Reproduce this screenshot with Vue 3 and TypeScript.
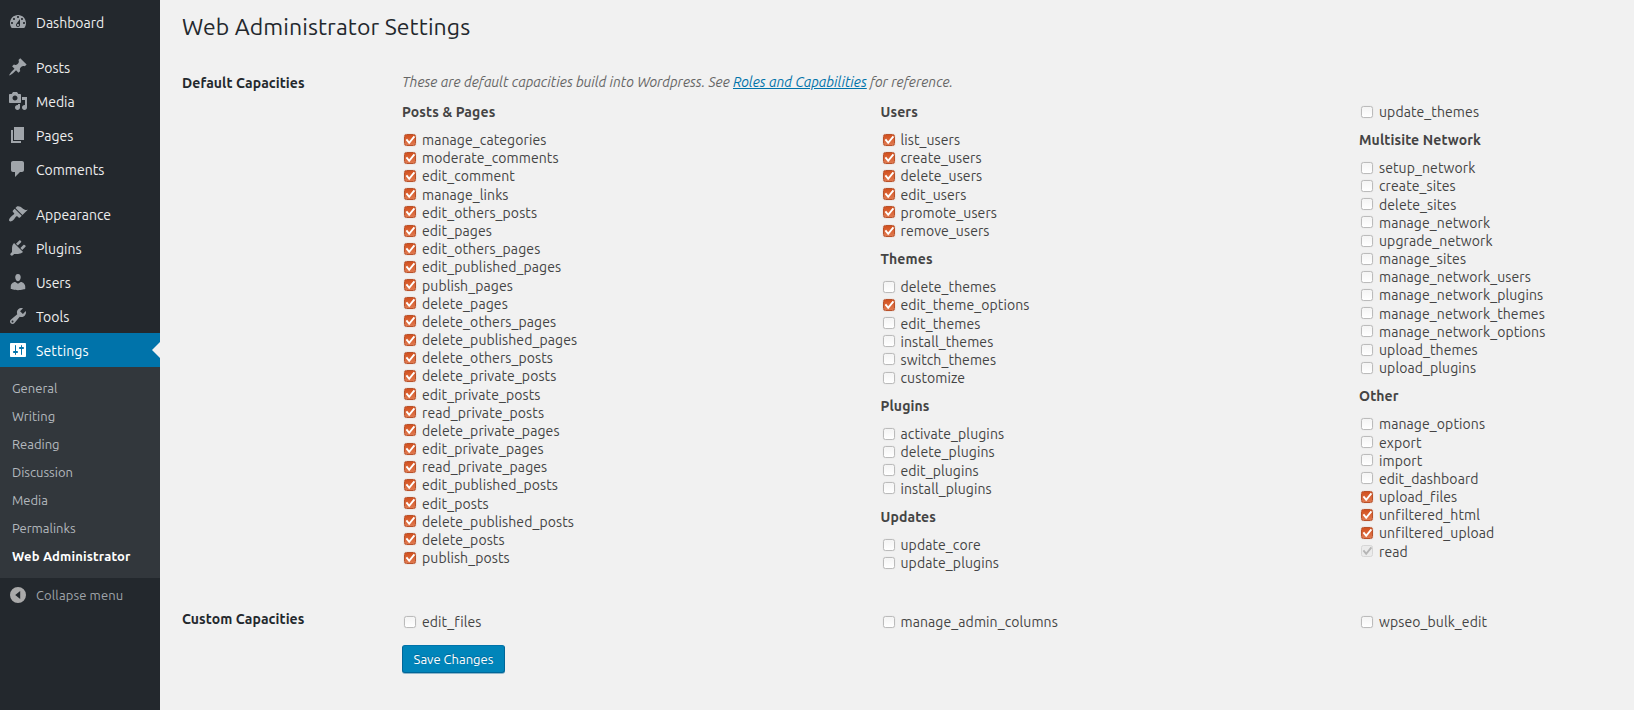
<script setup lang="ts">
interface MenuEntry {
  label: string
  icon: string
  gapBefore?: boolean
  current?: boolean
}

interface Capability {
  name: string
  checked: boolean
  disabled?: boolean
}

interface Group {
  title?: string
  items: Capability[]
}

const menu: MenuEntry[] = [
  { label: 'Dashboard', icon: 'M3.76 16h12.48c1.1-1.37 1.76-3.11 1.76-5 0-4.42-3.58-8-8-8s-8 3.58-8 8c0 1.89.66 3.63 1.76 5zM10 4c.55 0 1 .45 1 1s-.45 1-1 1-1-.45-1-1 .45-1 1-1zM6 6c.55 0 1 .45 1 1s-.45 1-1 1-1-.45-1-1 .45-1 1-1zm8 0c.55 0 1 .45 1 1s-.45 1-1 1-1-.45-1-1 .45-1 1-1zm-5.37 5.55L12 7v6c0 1.1-.9 2-2 2s-2-.9-2-2c0-.57.24-1.08.63-1.45zM4 10c.55 0 1 .45 1 1s-.45 1-1 1-1-.45-1-1 .45-1 1-1zm12 0c.55 0 1 .45 1 1s-.45 1-1 1-1-.45-1-1 .45-1 1-1zm-5 3c0-.55-.45-1-1-1s-1 .45-1 1 .45 1 1 1 1-.45 1-1z' },
  { label: 'Posts', gapBefore: true, icon: 'M10.44 3.02l1.82-1.82 6.36 6.35-1.83 1.82c-1.05-.68-2.48-.57-3.41.36l-.75.75c-.92.93-1.04 2.35-.35 3.41l-1.83 1.82-2.41-2.41-2.8 2.79c-.42.42-3.38 2.71-3.8 2.29s1.86-3.39 2.28-3.81l2.79-2.79L4.1 9.36l1.83-1.82c1.05.69 2.48.57 3.4-.36l.75-.75c.93-.92 1.05-2.35.36-3.41z' },
  { label: 'Media', icon: 'M13 11V4c0-.55-.45-1-1-1h-1.67L9 1H5L3.67 3H2c-.55 0-1 .45-1 1v7c0 .55.45 1 1 1h10c.55 0 1-.45 1-1zM7 4.5c1.38 0 2.5 1.12 2.5 2.5S8.38 9.5 7 9.5 4.5 8.38 4.5 7 5.62 4.5 7 4.5zM14 6h5v10.5c0 1.38-1.12 2.5-2.5 2.5S14 17.88 14 16.5s1.12-2.5 2.5-2.5c.17 0 .34.02.5.05V9h-3V6zm-4 8.05V13h2v3.5c0 1.38-1.12 2.5-2.5 2.5S7 17.88 7 16.5 8.12 14 9.5 14c.17 0 .34.02.5.05z' },
  { label: 'Pages', icon: 'M6 15V2h10v13H6zm-1 1h8v2H3V5h2v11z' },
  { label: 'Comments', icon: 'M5 2h9c1.1 0 2 .9 2 2v7c0 1.1-.9 2-2 2h-2l-5 5v-5H5c-1.1 0-2-.9-2-2V4c0-1.1.9-2 2-2z' },
  { label: 'Appearance', gapBefore: true, icon: 'M14.48 11.06L7.41 3.99l1.5-1.5c.5-.56 2.3-.47 3.51.32 1.21.8 1.43 1.28 2.91 2.1 1.18.64 2.45 1.26 4.45.85zm-.71.71L6.7 4.7 4.93 6.47c-.39.39-.39 1.02 0 1.41l1.06 1.06c.39.39.39 1.03 0 1.42-.6.6-1.43 1.11-2.21 1.69-.35.26-.7.53-1.01.84C1.43 14.23.4 16.08 1.4 17.07c.99 1 2.84-.03 4.18-1.36.31-.31.58-.66.85-1.02.57-.78 1.08-1.61 1.69-2.21.39-.39 1.02-.39 1.41 0l1.06 1.06c.39.39 1.02.39 1.41 0z' },
  { label: 'Plugins', icon: 'M13.11 4.36L9.87 7.6 8 5.73l3.24-3.24c.35-.34 1.05-.2 1.56.32.52.51.66 1.21.31 1.55zm-8 1.77l.91-1.12 9.01 9.01-1.19.84c-.71.71-2.63 1.16-3.82 1.16H6.14L4.9 17.26c-.59.59-1.54.59-2.12 0-.59-.58-.59-1.53 0-2.12l1.24-1.24v-3.88c0-1.13.4-3.19 1.09-3.89zm7.26 3.97l3.24-3.24c.34-.35 1.04-.21 1.55.31.52.51.66 1.21.31 1.55l-3.24 3.25z' },
  { label: 'Users', icon: 'M10 9.25c-2.27 0-2.73-3.44-2.73-3.44C7 4.02 7.82 2 9.97 2c2.16 0 2.98 2.02 2.71 3.81 0 0-.41 3.44-2.68 3.44zm0 2.57L12.72 10c2.39 0 4.52 2.33 4.52 4.53v2.49s-3.65 1.13-7.24 1.13c-3.65 0-7.24-1.13-7.24-1.13v-2.49c0-2.25 1.94-4.48 4.47-4.48z' },
  { label: 'Tools', icon: 'M16.68 9.77c-1.34 1.34-3.3 1.67-4.95.99l-5.41 6.52c-.99.99-2.59.99-3.58 0s-.99-2.59 0-3.57l6.52-5.42c-.68-1.65-.35-3.61.99-4.95 1.28-1.28 3.12-1.62 4.72-1.06l-2.89 2.89 2.82 2.82 2.86-2.87c.53 1.58.18 3.39-1.08 4.65zM3.81 16.21c.4.39 1.04.39 1.43 0 .4-.4.4-1.04 0-1.43-.39-.4-1.03-.4-1.43 0-.39.39-.39 1.03 0 1.43z' },
  { label: 'Settings', current: true, icon: 'M18 16V4c0-.55-.45-1-1-1H3c-.55 0-1 .45-1 1v12c0 .55.45 1 1 1h14c.55 0 1-.45 1-1zM8 11h1c.55 0 1 .45 1 1s-.45 1-1 1H8v1.5c0 .28-.22.5-.5.5s-.5-.22-.5-.5V13H6c-.55 0-1-.45-1-1s.45-1 1-1h1V5.5c0-.28.22-.5.5-.5s.5.22.5.5V11zm5-2h-1c-.55 0-1-.45-1-1s.45-1 1-1h1V5.5c0-.28.22-.5.5-.5s.5.22.5.5V7h1c.55 0 1 .45 1 1s-.45 1-1 1h-1v5.5c0 .28-.22.5-.5.5s-.5-.22-.5-.5V9z' },
]

const submenu = ['General', 'Writing', 'Reading', 'Discussion', 'Media', 'Permalinks', 'Web Administrator']

const on = (names: string): Capability[] => names.split(' ').map((name) => ({ name, checked: true }))
const off = (names: string): Capability[] => names.split(' ').map((name) => ({ name, checked: false }))

const columns: Group[][] = [
  [
    {
      title: 'Posts & Pages',
      items: on('manage_categories moderate_comments edit_comment manage_links edit_others_posts edit_pages edit_others_pages edit_published_pages publish_pages delete_pages delete_others_pages delete_published_pages delete_others_posts delete_private_posts edit_private_posts read_private_posts delete_private_pages edit_private_pages read_private_pages edit_published_posts edit_posts delete_published_posts delete_posts publish_posts'),
    },
  ],
  [
    { title: 'Users', items: on('list_users create_users delete_users edit_users promote_users remove_users') },
    {
      title: 'Themes',
      items: [...off('delete_themes'), ...on('edit_theme_options'), ...off('edit_themes install_themes switch_themes customize')],
    },
    { title: 'Plugins', items: off('activate_plugins delete_plugins edit_plugins install_plugins') },
    { title: 'Updates', items: off('update_core update_plugins') },
  ],
  [
    { items: off('update_themes') },
    {
      title: 'Multisite Network',
      items: off('setup_network create_sites delete_sites manage_network upgrade_network manage_sites manage_network_users manage_network_plugins manage_network_themes manage_network_options upload_themes upload_plugins'),
    },
    {
      title: 'Other',
      items: [
        ...off('manage_options export import edit_dashboard'),
        ...on('upload_files unfiltered_html unfiltered_upload'),
        { name: 'read', checked: true, disabled: true },
      ],
    },
  ],
]

const custom: Group[][] = off('edit_files manage_admin_columns wpseo_bulk_edit').map((item) => [{ items: [item] }])

const sections = [
  { key: 'default', title: 'Default Capacities', columns },
  { key: 'custom', title: 'Custom Capacities', columns: custom },
]
</script>

<template>
  <div class="admin">
    <nav class="sidebar">
      <a v-for="entry in menu" :key="entry.label" class="menu-item" :class="{ gap: entry.gapBefore, current: entry.current }">
        <svg class="menu-icon" viewBox="0 0 20 20"><path :d="entry.icon" fill-rule="evenodd" /></svg>
        <span>{{ entry.label }}</span>
      </a>
      <div class="submenu">
        <a v-for="label in submenu" :key="label" :class="{ selected: label === 'Web Administrator' }">{{ label }}</a>
      </div>
      <a class="menu-item collapse">
        <svg class="menu-icon" viewBox="0 0 20 20"><path d="M10 2a8 8 0 1 0 0 16 8 8 0 0 0 0-16zM12.2 6v8L7.2 10z" fill-rule="evenodd" /></svg>
        <span>Collapse menu</span>
      </a>
    </nav>

    <main class="content">
      <h1>Web Administrator Settings</h1>
      <section v-for="section in sections" :key="section.key" class="row" :class="section.key">
        <h2>{{ section.title }}</h2>
        <div class="field">
          <p v-if="section.key === 'default'" class="description">
            These are default capacities build into Wordpress. See <a>Roles and Capabilities</a> for reference.
          </p>
          <div class="columns">
            <div v-for="(groups, c) in section.columns" :key="c" class="column">
              <div v-for="(group, g) in groups" :key="g" class="group">
                <h3 v-if="group.title">{{ group.title }}</h3>
                <label v-for="cap in group.items" :key="cap.name">
                  <span class="box" :class="{ checked: cap.checked, disabled: cap.disabled }">
                    <svg v-if="cap.checked" viewBox="0 0 12 12"><path d="M2.4 5.4l2.8 3.4L10.4 2.4" /></svg>
                  </span>
                  <span class="cap">{{ cap.name }}</span>
                </label>
              </div>
            </div>
          </div>
          <button v-if="section.key === 'custom'" type="button">Save Changes</button>
        </div>
      </section>
    </main>
  </div>
</template>

<style>
body {
  background: #f1f1f1;
}
</style>

<style scoped>
.admin {
  display: flex;
  height: 710px;
  overflow: hidden;
  background: #f1f1f1;
  color: #444;
  font: 14px/1.3 Ubuntu, "Noto Sans", sans-serif;
}

.sidebar {
  box-sizing: border-box;
  flex: none;
  width: 160px;
  padding-top: 5px;
  background: #23282d;
}

.menu-item {
  display: flex;
  align-items: center;
  position: relative;
  height: 34px;
  padding-left: 8px;
  gap: 8px;
  color: #eee;
}

.menu-item span {
  padding-top: 2px;
}

.menu-item.gap {
  margin-top: 11px;
}

.menu-icon {
  width: 20px;
  height: 20px;
  fill: #a0a5aa;
}

.menu-item.current {
  background: #0073aa;
  color: #fff;
  letter-spacing: 0.15px;
}

.current .menu-icon {
  fill: #fff;
}

.menu-item.current::after {
  content: "";
  position: absolute;
  right: 0;
  top: 9px;
  border: 8px solid transparent;
  border-left: 0;
  border-right-color: #f1f1f1;
}

.submenu {
  padding: 7px 0 8px 12px;
  background: #32373c;
  font-size: 13px;
}

.submenu a {
  display: block;
  line-height: 28px;
  color: #b4b9be;
}

.submenu .selected {
  color: #fff;
  font-weight: 600;
  letter-spacing: 0.17px;
}

.menu-item.collapse {
  color: #a0a5aa;
  font-size: 13px;
  letter-spacing: 0.12px;
}

.menu-item.collapse span {
  padding-top: 0;
}

.collapse .menu-icon {
  fill: #aaa;
}

.content {
  flex: 1;
  padding-left: 22px;
}

h1 {
  margin: 12px 0 39px;
  color: #23282d;
  font-size: 23px;
  font-weight: 400;
  line-height: 30px;
  letter-spacing: 0.1px;
}

.row {
  display: flex;
}

.default {
  height: 532px;
}

h2 {
  flex: none;
  width: 220px;
  margin: -7px 0 0;
  color: #23282d;
  font-size: 14px;
  font-weight: 600;
  line-height: 18px;
  letter-spacing: 0.07px;
}

.custom h2 {
  margin-top: -3px;
}

.field {
  flex: 1;
}

.description {
  margin: -8px 0 12px;
  color: #666;
  font-style: italic;
  line-height: 18px;
}

.description a {
  color: #0073aa;
  text-decoration: underline;
}

.columns {
  display: grid;
  grid-template-columns: repeat(3, 478.5px);
}

h3 {
  height: 18.2px;
  margin: 9.95px 0;
  font-size: 14px;
  font-weight: 600;
  line-height: 18.2px;
  letter-spacing: 0.12px;
}

.group:first-child h3 {
  margin-top: 0;
}

label {
  display: flex;
  align-items: center;
  height: 18.18px;
  padding-left: 2px;
}

.cap {
  letter-spacing: 0.1px;
}

.box {
  box-sizing: border-box;
  display: flex;
  flex: none;
  width: 12px;
  height: 12px;
  margin: -1px 6px 0 0;
  border: 1px solid #bbb;
  border-radius: 2.5px;
  background: linear-gradient(#f4f4f4, #fff);
  box-shadow: 0 0 1px #c8c8c8;
}

.box svg {
  width: 12px;
  height: 12px;
  margin: -1px;
  fill: none;
  stroke: #fff;
  stroke-width: 1.9;
}

.box.checked {
  border-color: #b9512a;
  background: linear-gradient(#d2501e, #e07a50);
  box-shadow: 0 0 1px #c98a70;
}

.box.checked.disabled {
  border-color: #d6d6d6;
  background: #ebebeb;
  box-shadow: none;
}

.disabled svg {
  stroke: #b5b5b5;
}

button {
  display: block;
  box-sizing: border-box;
  width: 103px;
  height: 28px;
  margin-top: 14px;
  padding: 0;
  border: 1px solid #006799;
  border-top-color: #0073aa;
  border-radius: 3px;
  background: #0085ba;
  box-shadow: 0 1px 0 #8fb7cb;
  color: #fff;
  font: inherit;
  font-size: 13px;
  text-shadow: 0 -1px 1px #006799;
}
</style>
